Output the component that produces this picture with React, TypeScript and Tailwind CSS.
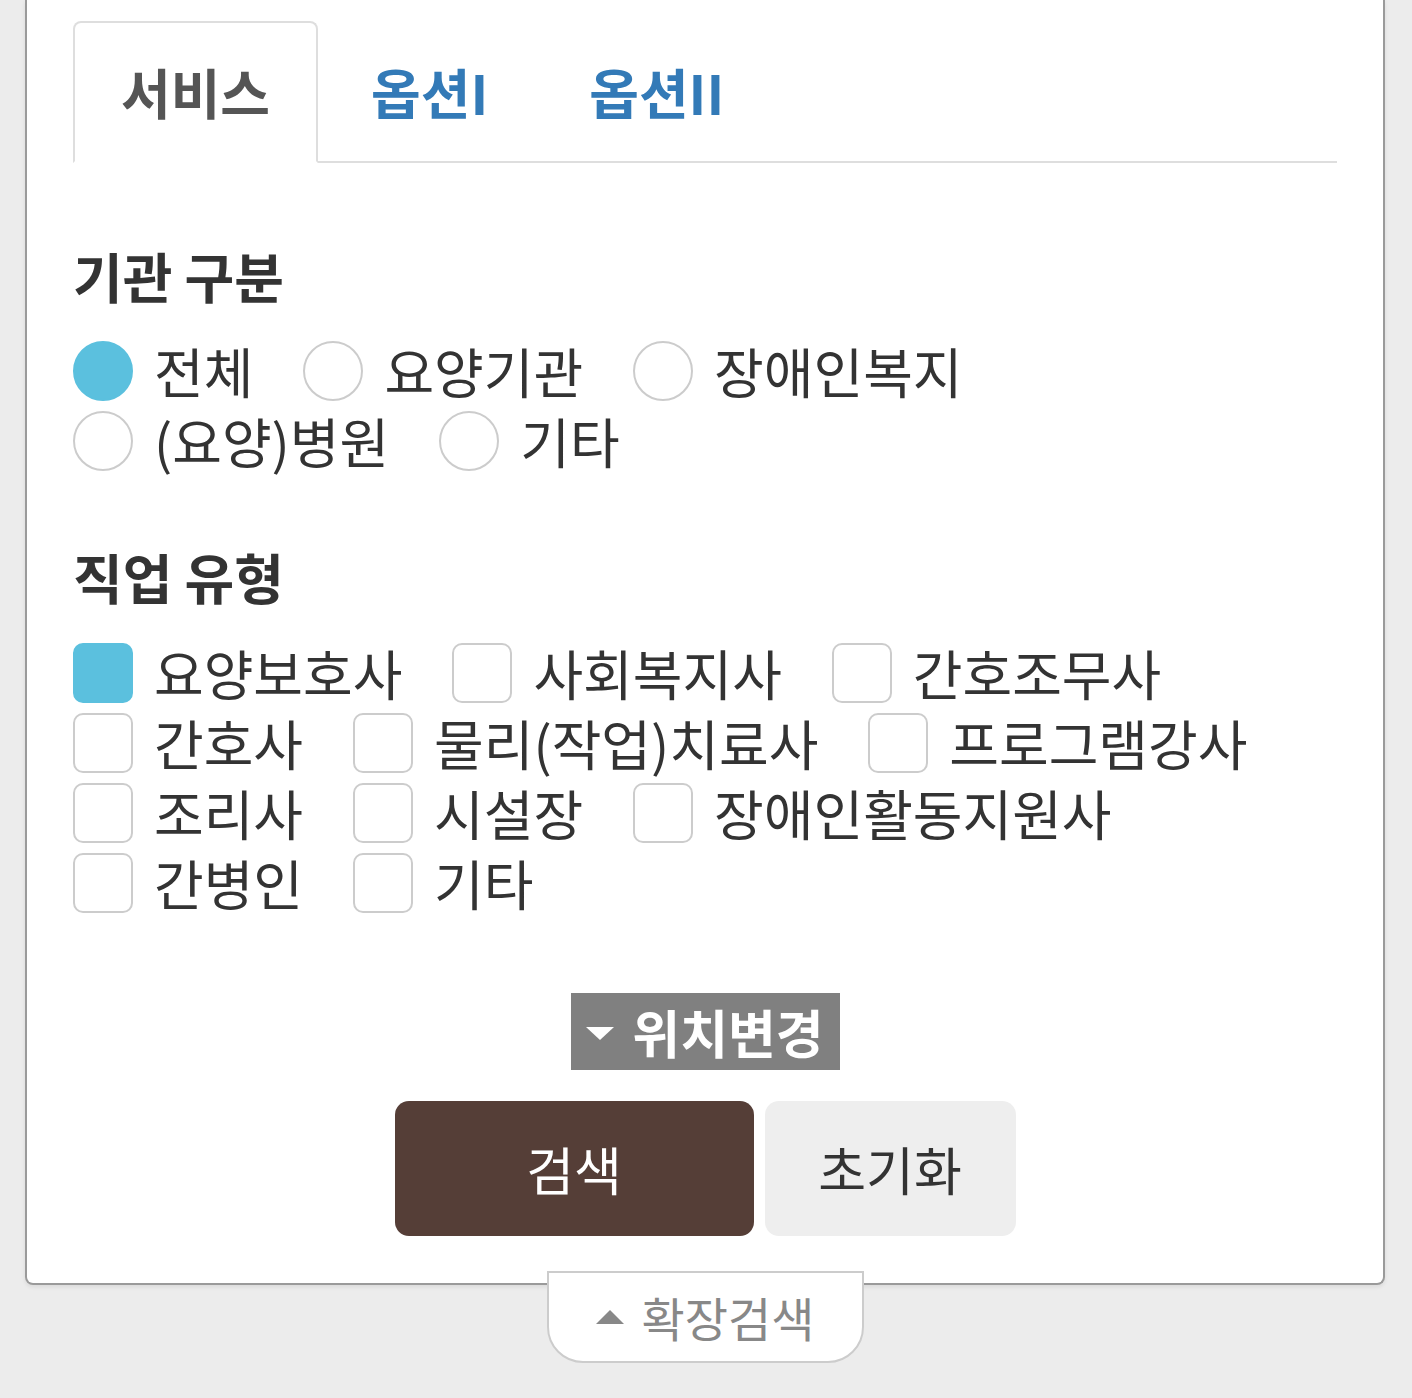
import { useState } from 'react'

const orgTypes = ['전체', '요양기관', '장애인복지', '(요양)병원', '기타']
const jobTypes = [
  '요양보호사',
  '사회복지사',
  '간호조무사',
  '간호사',
  '물리(작업)치료사',
  '프로그램강사',
  '조리사',
  '시설장',
  '장애인활동지원사',
  '간병인',
  '기타',
]
const tabs = ['서비스', '옵션I', '옵션II']

export default function App() {
  const [tab, setTab] = useState(0)
  const [org, setOrg] = useState('전체')
  const [jobs, setJobs] = useState<string[]>(['요양보호사'])

  const toggleJob = (job: string) => {
    setJobs((prev) => (prev.includes(job) ? prev.filter((j) => j !== job) : [...prev, job]))
  }

  return (
    <div className="min-h-[1398px] bg-[#ececec] font-['Noto_Sans_CJK_KR','Noto_Sans',sans-serif] text-[#333]">
      <div className="ml-[25px] w-[1360px]">
        {/* Search card */}
        <div className="rounded-b-[8px] border-2 border-t-0 border-[#9a9a9a] bg-white px-[46px] pb-[47px] shadow-[0_2px_4px_rgba(0,0,0,0.08)]">
          {/* Tabs */}
          <ul className="flex border-b-2 border-[#dedede] pt-[21px]">
            {tabs.map((t, i) => (
              <li key={t} className="-mb-[2px] mr-[5px]">
                <button
                  onClick={() => setTab(i)}
                  className={
                    i === tab
                      ? 'flex h-[142px] items-center rounded-t-[8px] border-2 border-[#dedede] border-b-white bg-white px-[46px] text-[54px] leading-[60px] font-bold text-[#555]'
                      : 'flex h-[142px] items-center rounded-t-[8px] border-2 border-transparent px-[46px] text-[54px] leading-[60px] font-bold text-[#337ab7]'
                  }
                >
                  {t}
                </button>
              </li>
            ))}
          </ul>

          {/* 기관 구분 */}
          <h3 className="mt-[83px] text-[54px] leading-[60px] font-bold">기관 구분</h3>
          <div className="mt-[30px] flex flex-wrap">
            {orgTypes.map((o) => (
              <label key={o} onClick={() => setOrg(o)} className="mr-[50px] flex h-[70px] cursor-pointer items-center">
                <span
                  className={
                    org === o
                      ? 'h-[60px] w-[60px] rounded-full border-2 border-[#5bc0de] bg-[#5bc0de]'
                      : 'h-[60px] w-[60px] rounded-full border-2 border-[#cccccc] bg-white'
                  }
                />
                <span className="ml-[21px] text-[54px] leading-[70px]">{o}</span>
              </label>
            ))}
          </div>

          {/* 직업 유형 */}
          <h3 className="mt-[71px] text-[54px] leading-[60px] font-bold">직업 유형</h3>
          <div className="mt-[31px] flex flex-wrap">
            {jobTypes.map((j) => (
              <label key={j} onClick={() => toggleJob(j)} className="mr-[50px] flex h-[70px] cursor-pointer items-center">
                <span
                  className={
                    jobs.includes(j)
                      ? 'h-[60px] w-[60px] rounded-[10px] border-2 border-[#5bc0de] bg-[#5bc0de]'
                      : 'h-[60px] w-[60px] rounded-[10px] border-2 border-[#cccccc] bg-white'
                  }
                />
                <span className="ml-[21px] text-[54px] leading-[70px]">{j}</span>
              </label>
            ))}
          </div>

          {/* 위치변경 */}
          <div className="mt-[75px] flex justify-center">
            <button className="flex h-[77px] w-[269px] items-center justify-center gap-[18px] bg-[#808080] text-[52px] leading-[60px] font-bold text-white">
              <span className="mt-[4px] h-0 w-0 border-x-[14px] border-t-[13px] border-x-transparent border-t-white" />
              위치변경
            </button>
          </div>

          {/* Actions */}
          <div className="mt-[31px] flex justify-center gap-[11px]">
            <button className="h-[135px] w-[359px] rounded-[14px] bg-[#553e37] text-[52px] text-white">검색</button>
            <button className="h-[135px] w-[251px] rounded-[14px] bg-[#eeeeee] text-[52px] text-[#333]">초기화</button>
          </div>
        </div>

        {/* 확장검색 */}
        <div className="flex justify-center">
          <button className="relative -mt-[14px] flex h-[92px] w-[317px] items-center justify-center gap-[18px] rounded-b-[36px] border-2 border-[#cccccc] bg-white text-[47px] leading-[56px] text-[#888]">
            <span className="h-0 w-0 border-x-[14px] border-b-[14px] border-x-transparent border-b-[#888]" />
            확장검색
          </button>
        </div>
      </div>
    </div>
  )
}
